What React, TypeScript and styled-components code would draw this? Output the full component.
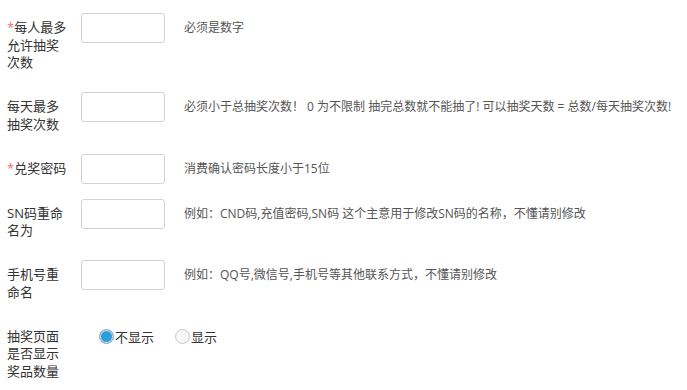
import styled, { createGlobalStyle } from "styled-components";

// base page styles
const GlobalStyle = createGlobalStyle`
  body {
    margin: 0;
    background: #fff;
    font-family: "Open Sans", "Noto Sans CJK SC", sans-serif;
  }
`

// form wrapper
const Form = styled.div`
  padding: 13px 0 0 7px;
`

// one row of the form
const Row = styled.div`
  display: flex;
  align-items: flex-start;
  margin-bottom: 15px;
`

// left label
const Label = styled.div`
  width: 60px;
  padding: 6px 0 5.5px;
  font-size: 13px;
  line-height: 17.5px;
  color: #333;
  word-break: break-all;
`

const Star = styled.span`
  color: #f56c6c;
`

// text box
const Input = styled.input`
  box-sizing: border-box;
  width: 84px;
  height: 30px;
  margin-left: 14px;
  border: 1px solid #d2d2d2;
  border-radius: 3px;
  outline: none;
  background: #fff;
`

// gray hint right of the input
const Help = styled.div`
  margin-left: 19px;
  padding-top: 6px;
  font-size: 12px;
  line-height: 18px;
  color: #555;
  white-space: nowrap;
`

const RadioGroup = styled.div`
  display: flex;
  align-items: center;
  gap: 21px;
  margin-left: 32px;
  padding-top: 6px;
`

const RadioItem = styled.label`
  display: flex;
  align-items: center;
  gap: 1px;
  font-size: 13px;
  line-height: 18px;
  color: #333;
`

const Dot = styled.span<{ $on?: boolean }>`
  box-sizing: border-box;
  width: 15px;
  height: 15px;
  border-radius: 50%;
  border: 1px solid ${p => (p.$on ? "#9db3c4" : "#c8c8c8")};
  background: ${p => (p.$on ? "#2d9fd8" : "#f7f7f7")};
  box-shadow: ${p => (p.$on ? "inset 0 0 0 1px #d9e6ef" : "none")};
`

export default function App() {
  return (
    <>
      <GlobalStyle />
      <Form>
        <Row>
          <Label><Star>*</Star>每人最多允许抽奖次数</Label>
          <Input />
          <Help>必须是数字</Help>
        </Row>
        <Row>
          <Label>每天最多抽奖次数</Label>
          <Input />
          <Help>必须小于总抽奖次数！ 0 为不限制 抽完总数就不能抽了! 可以抽奖天数 = 总数/每天抽奖次数!</Help>
        </Row>
        <Row>
          <Label><Star>*</Star>兑奖密码</Label>
          <Input />
          <Help>消费确认密码长度小于15位</Help>
        </Row>
        <Row>
          <Label>SN码重命名为</Label>
          <Input />
          <Help>例如：CND码,充值密码,SN码 这个主意用于修改SN码的名称，不懂请别修改</Help>
        </Row>
        <Row>
          <Label>手机号重命名</Label>
          <Input />
          <Help>例如：QQ号,微信号,手机号等其他联系方式，不懂请别修改</Help>
        </Row>
        <Row>
          <Label>抽奖页面是否显示奖品数量</Label>
          <RadioGroup>
            <RadioItem><Dot $on />不显示</RadioItem>
            <RadioItem><Dot />显示</RadioItem>
          </RadioGroup>
        </Row>
      </Form>
    </>
  )
}
